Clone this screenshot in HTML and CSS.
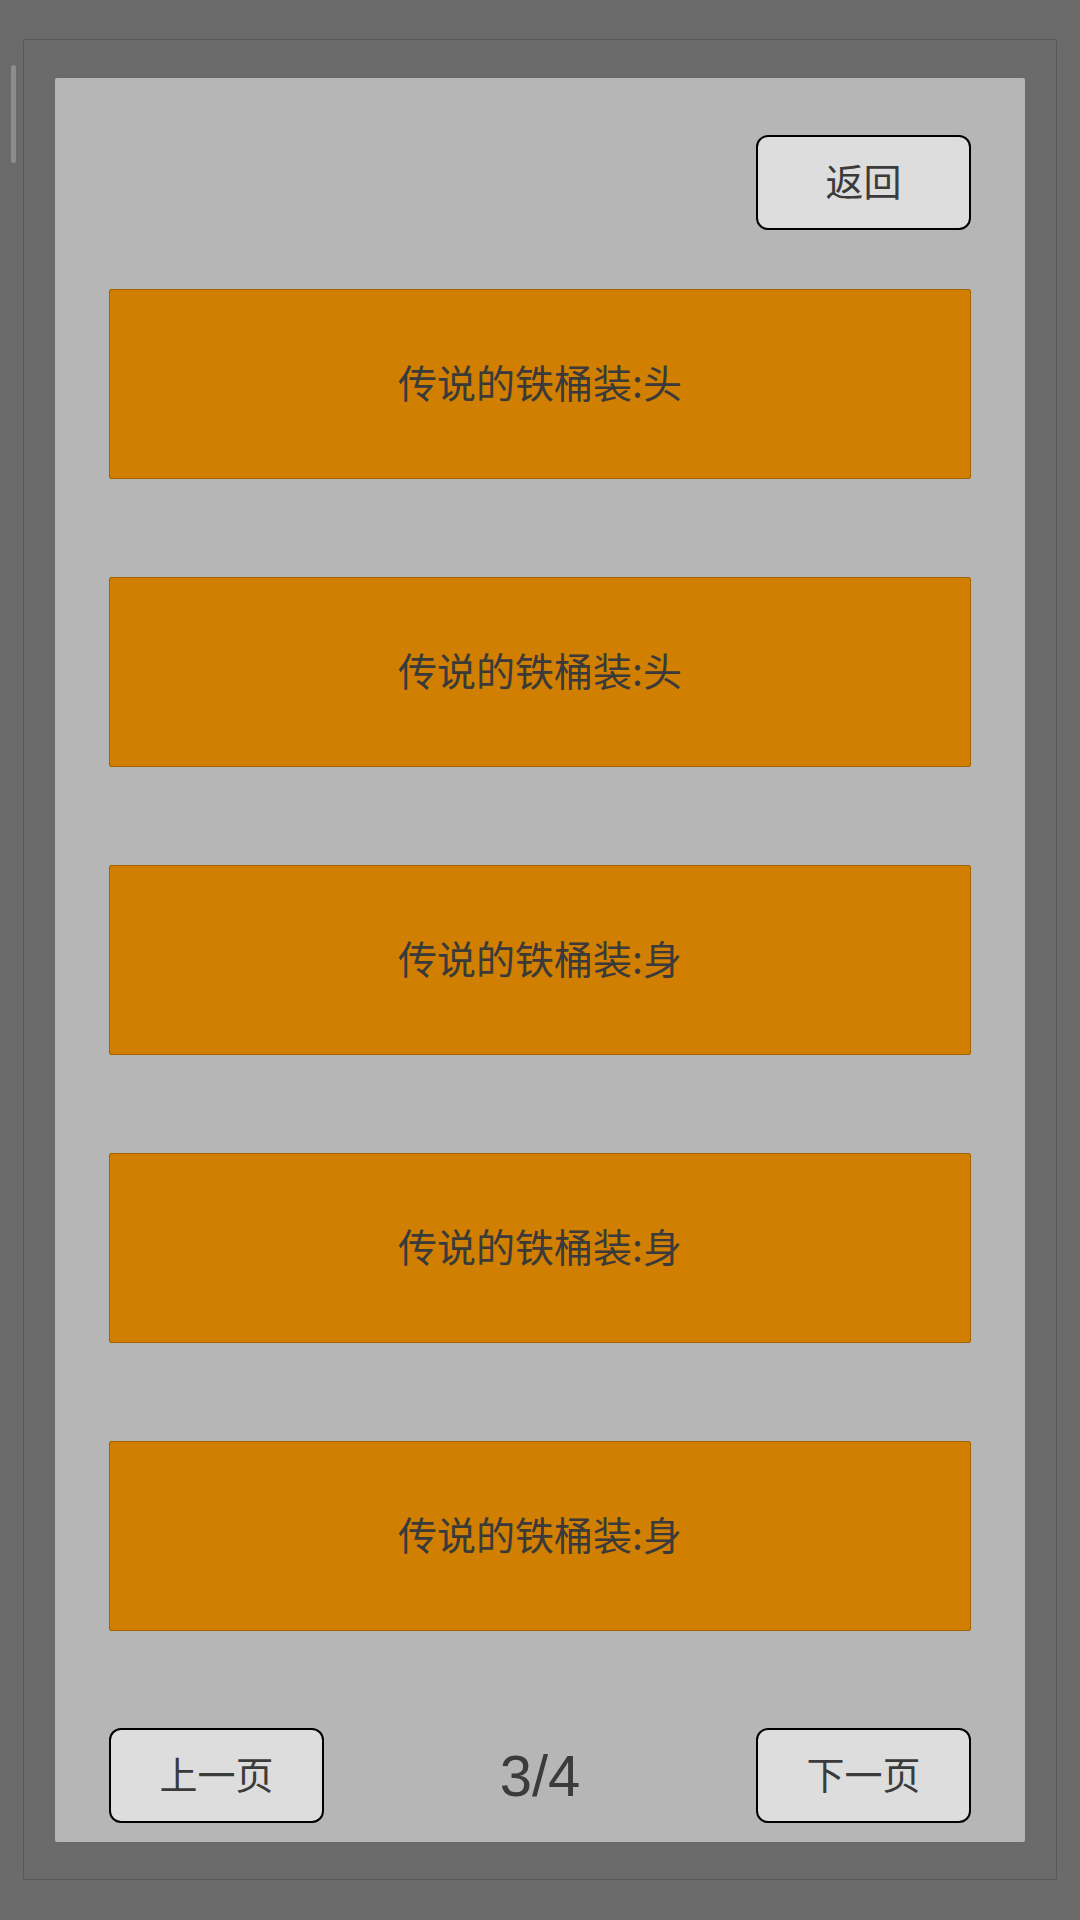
FILE: index.html
```html
<!DOCTYPE html>
<html lang="zh">
<head>
<meta charset="utf-8">
<link rel="stylesheet" href="styles.css">
</head>
<body>
<div class="scrollbar"></div>
<div class="frame">
  <div class="panel">
    <div class="top-row">
      <div class="btn">返回</div>
    </div>
    <div class="list">
      <div class="item">传说的铁桶装:头</div>
      <div class="item">传说的铁桶装:头</div>
      <div class="item">传说的铁桶装:身</div>
      <div class="item">传说的铁桶装:身</div>
      <div class="item">传说的铁桶装:身</div>
    </div>
    <div class="pager">
      <div class="btn">上一页</div>
      <div class="page-num">3/4</div>
      <div class="btn">下一页</div>
    </div>
  </div>
</div>
</body>
</html>
```

FILE: styles.css
```css
html, body {
  margin: 0;
  padding: 0;
}
body {
  width: 1080px;
  height: 1920px;
  background: #6b6b6b;
  position: relative;
  font-family: "Noto Sans CJK SC", "Noto Sans", sans-serif;
  color: #3b3b3b;
  padding-top: 39px;
  box-sizing: border-box;
}
.scrollbar {
  position: absolute;
  left: 11px;
  top: 65px;
  width: 5px;
  height: 98px;
  border-radius: 3px;
  background: #8d8d8d;
}
.frame {
  margin-left: 23px;
  width: 1034px;
  height: 1841px;
  box-sizing: border-box;
  border: 1px solid #585858;
  border-radius: 2px;
  padding: 38px 31px 37px 31px;
}
.panel {
  height: 100%;
  box-sizing: border-box;
  background: #b6b6b6;
  border-radius: 2px;
  padding: 57px 54px 19px 54px;
  display: flex;
  flex-direction: column;
}
.top-row {
  display: flex;
  justify-content: flex-end;
}
.btn {
  width: 215px;
  height: 95px;
  box-sizing: border-box;
  border: 2px solid #000;
  border-radius: 12px;
  background: #dddddd;
  display: flex;
  align-items: center;
  justify-content: center;
  font-size: 38px;
  line-height: 1;
  padding-bottom: 6px;
  color: #3b3b3b;
}
.list {
  margin-top: 59px;
  display: flex;
  flex-direction: column;
  gap: 98px;
}
.item {
  height: 190px;
  box-sizing: border-box;
  background: #d17f00;
  border: 1px solid #a26200;
  border-radius: 2px;
  display: flex;
  align-items: center;
  justify-content: center;
  font-size: 39px;
  line-height: 1;
  padding-bottom: 6px;
  color: #3a3a3a;
}
.pager {
  margin-top: auto;
  display: flex;
  align-items: center;
  justify-content: space-between;
}
.page-num {
  font-family: "Liberation Sans", Arial, sans-serif;
  font-size: 58px;
  color: #3b3b3b;
}
```
